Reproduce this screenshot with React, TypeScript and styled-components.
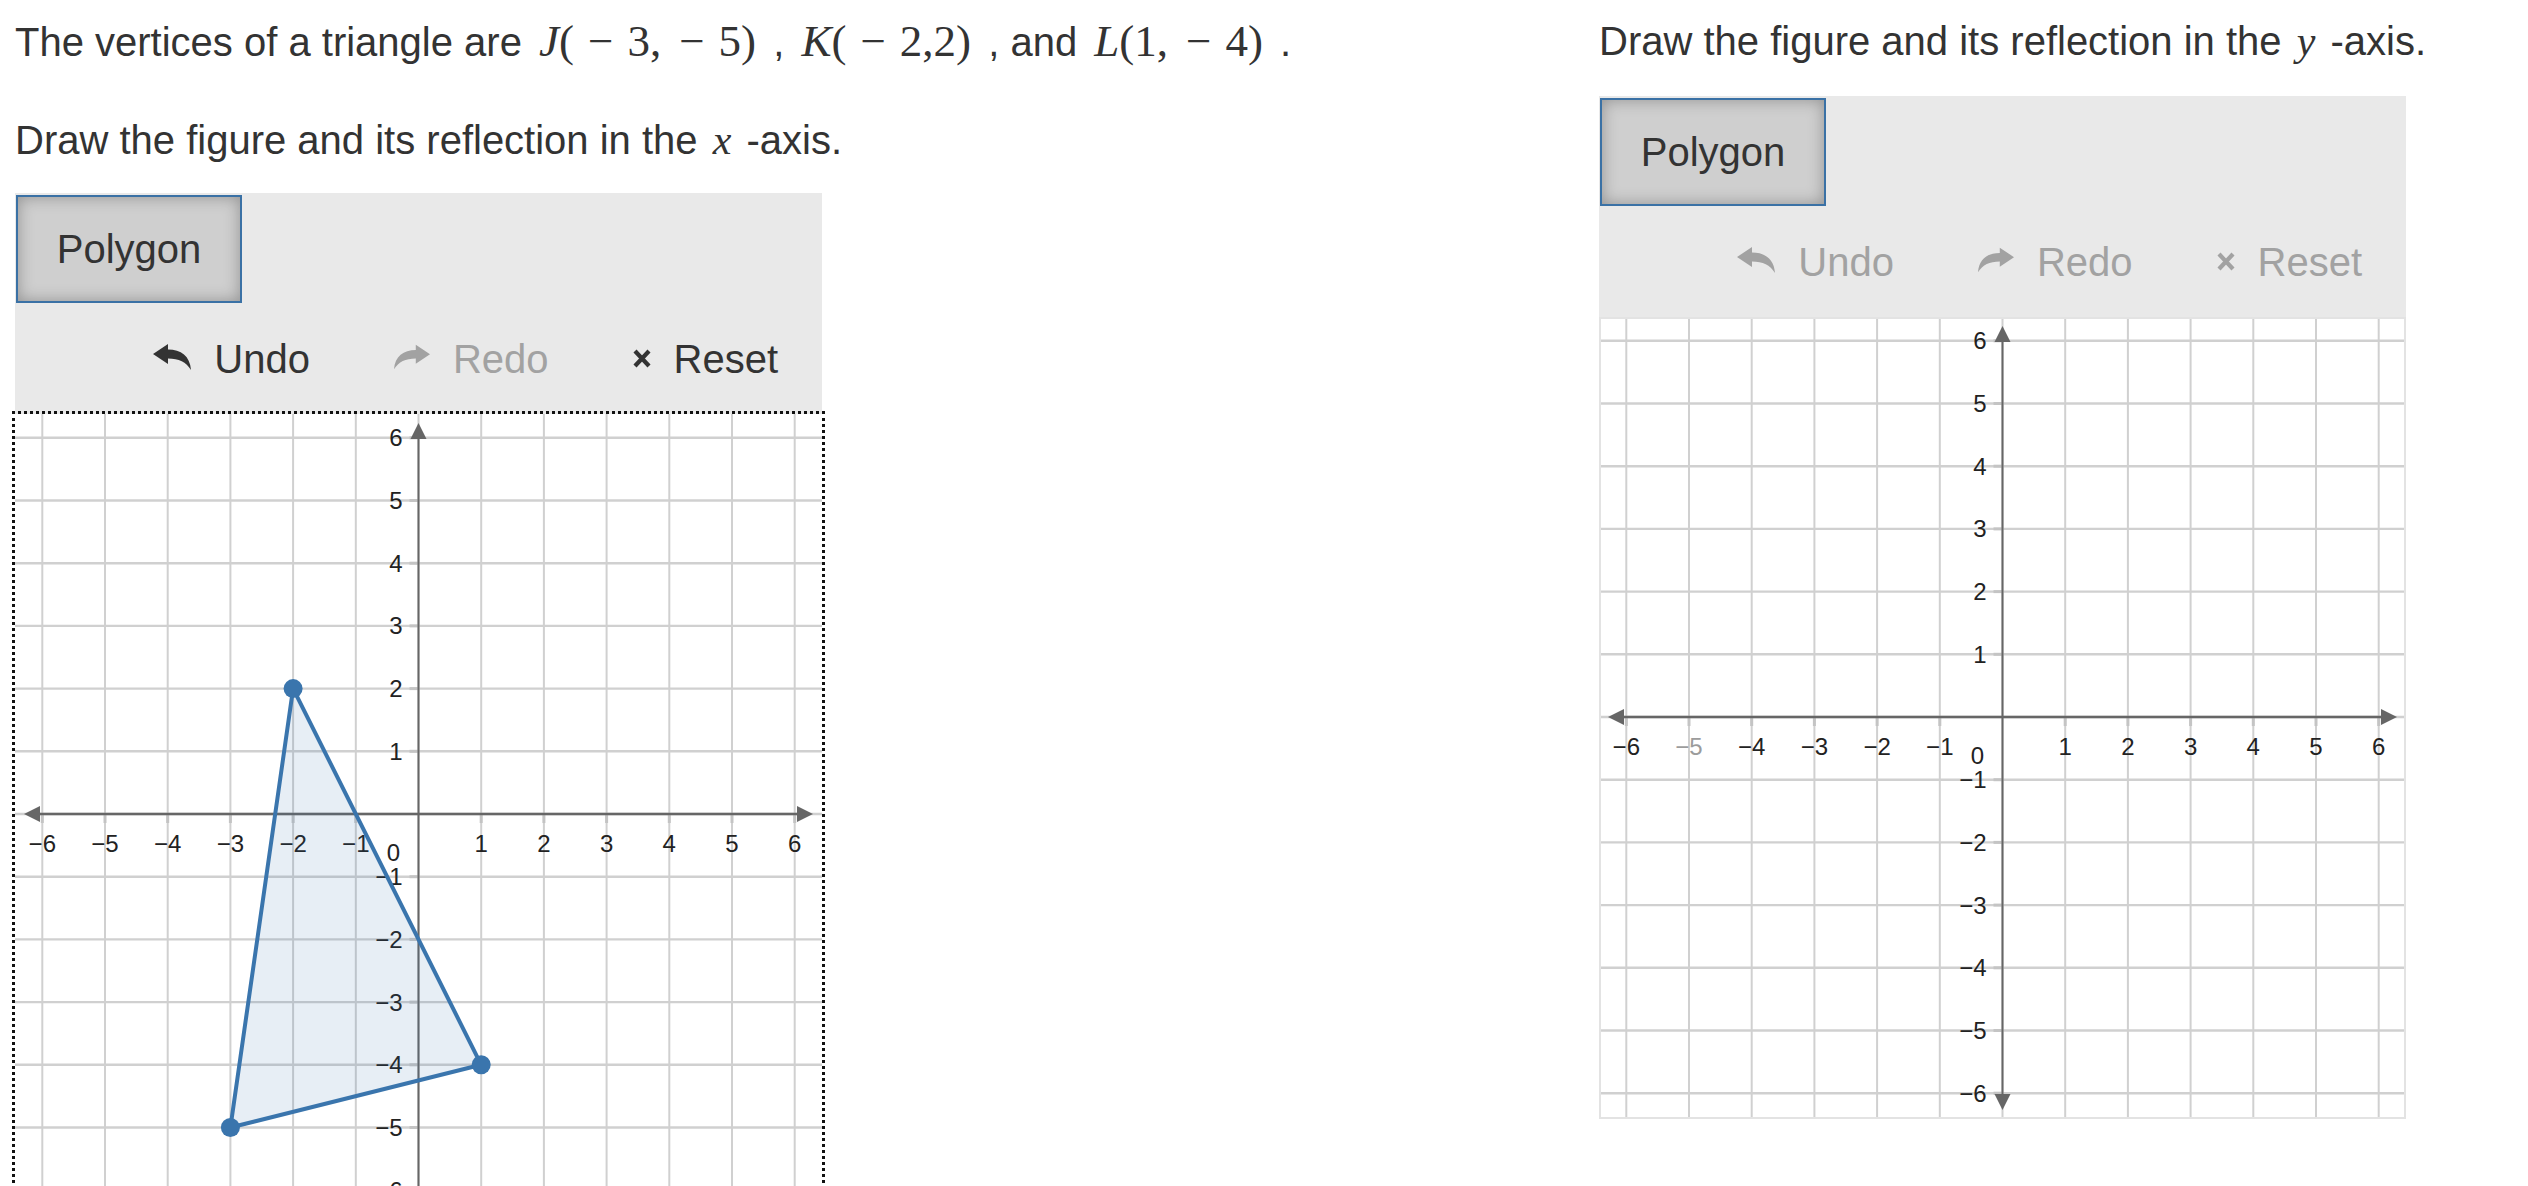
import React from "react";
import styled, { createGlobalStyle } from "styled-components";

const GlobalStyle = createGlobalStyle`
  html, body { margin: 0; padding: 0; background: #ffffff; }
  body {
    font-family: "Liberation Sans", Arial, Helvetica, sans-serif;
    color: #333333;
  }
`;

const W = 807;
const H = 802;
const OX = 403.5;
const OY = 400;
const U = 62.7;
const STEPS = [-6, -5, -4, -3, -2, -1, 0, 1, 2, 3, 4, 5, 6];
const NONZERO = STEPS.filter((s) => s !== 0);

const Page = styled.main`
  display: grid;
  grid-template-columns: 807px 807px;
  column-gap: 777px;
  align-items: start;
  padding: 12px 0 0 15px;
`;

const Column = styled.section`
  display: flex;
  flex-direction: column;
`;

const Prompt = styled.p<{ $gap: number }>`
  margin: 0 0 ${(p) => p.$gap}px;
  font-size: 40px;
  line-height: 58px;
  white-space: nowrap;
`;

const MathText = styled.span<{ $small?: boolean }>`
  font-family: "Liberation Serif", "Times New Roman", serif;
  font-size: ${(p) => (p.$small ? 42 : 45)}px;
  margin: 0 ${(p) => (p.$small ? 4 : 6)}px;
  white-space: nowrap;
`;

const MathVar = styled.i`
  font-style: italic;
`;

const MathMinus = styled.span`
  margin: 0 14px;
`;

const MathComma = styled.span<{ $space?: boolean }>`
  margin-right: ${(p) => (p.$space ? 4 : 0)}px;
`;

const Panel = styled.div`
  width: 807px;
  display: flex;
  flex-direction: column;
`;

const Toolbar = styled.div`
  background: #e9e9e9;
  display: flex;
  flex-direction: column;
`;

const ModeRow = styled.div`
  display: flex;
  padding: 2px 0 0 1px;
`;

const ModeButton = styled.button`
  width: 226px;
  height: 108px;
  padding: 0;
  margin: 0;
  border: 2px solid #3a71a5;
  background: #cfcfcf;
  box-shadow: inset 0 0 16px rgba(0, 0, 0, 0.3);
  font-family: "Liberation Sans", Arial, sans-serif;
  font-size: 40px;
  color: #333333;
  cursor: pointer;
`;

const ActionRow = styled.div`
  height: 111px;
  display: flex;
  align-items: center;
  justify-content: flex-end;
  gap: 84px;
  padding-right: 44px;
`;

const ActionButton = styled.button<{ $disabled?: boolean }>`
  display: flex;
  align-items: center;
  gap: 23px;
  padding: 0;
  margin: 0;
  border: none;
  background: none;
  font-family: "Liberation Sans", Arial, sans-serif;
  font-size: 40px;
  line-height: 1;
  color: ${(p) => (p.$disabled ? "#a2a2a2" : "#333333")};
  cursor: ${(p) => (p.$disabled ? "default" : "pointer")};
`;

const IconSvg = styled.svg<{ $lift?: number }>`
  display: block;
  flex: none;
  margin-bottom: ${(p) => p.$lift ?? 0}px;
`;

const GraphFrame = styled.div<{ $focused?: boolean }>`
  width: ${W}px;
  height: ${H}px;
  background: #ffffff;
  outline: ${(p) => (p.$focused ? "3px dotted #111111" : "2px solid #e3e3e3")};
  outline-offset: ${(p) => (p.$focused ? "0px" : "-2px")};
  svg {
    display: block;
  }
`;

const UndoIcon = () => (
  <IconSvg width={38} height={26} viewBox="0 0 38 26" $lift={4}>
    <path
      d="M0 10 L15 0 L15 5.5 C28 5.5 37 12 38 26 C33 18 26 14.5 15 14.5 L15 20 Z"
      fill="currentColor"
    />
  </IconSvg>
);

const RedoIcon = () => (
  <IconSvg width={36} height={26} viewBox="0 0 38 26" $lift={4}>
    <path
      transform="translate(38 0) scale(-1 1)"
      d="M0 10 L15 0 L15 5.5 C28 5.5 37 12 38 26 C33 18 26 14.5 15 14.5 L15 20 Z"
      fill="currentColor"
    />
  </IconSvg>
);

const ResetIcon = () => (
  <IconSvg width={18} height={19} viewBox="0 0 18 19">
    <path d="M2 2 L16 17 M16 2 L2 17" stroke="currentColor" strokeWidth={4.2} />
  </IconSvg>
);

type Pt = [number, number];

const px = (x: number) => OX + x * U;
const py = (y: number) => OY - y * U;

function Graph({ points, mutedX }: { points?: Pt[]; mutedX?: number }) {
  const labelFont = "'Liberation Sans', Arial, sans-serif";
  return (
    <svg width={W} height={H} viewBox={`0 0 ${W} ${H}`}>
      {STEPS.map((i) => (
        <line key={`v${i}`} x1={px(i)} y1={0} x2={px(i)} y2={H} stroke="#d0d0d0" strokeWidth={2} />
      ))}
      {STEPS.map((j) => (
        <line key={`h${j}`} x1={0} y1={py(j)} x2={W} y2={py(j)} stroke="#d0d0d0" strokeWidth={2.4} />
      ))}
      {NONZERO.map((i) => (
        <line key={`tx${i}`} x1={px(i)} y1={OY} x2={px(i)} y2={OY + 9} stroke="#c4c4c4" strokeWidth={3} />
      ))}
      {NONZERO.map((j) => (
        <line key={`ty${j}`} x1={OX - 9} y1={py(j)} x2={OX} y2={py(j)} stroke="#c4c4c4" strokeWidth={3} />
      ))}
      <line x1={20} y1={OY} x2={W - 20} y2={OY} stroke="#666666" strokeWidth={2.6} />
      <line x1={OX} y1={20} x2={OX} y2={H - 20} stroke="#666666" strokeWidth={2} />
      <polygon points={`9,${OY} 25,${OY - 8} 25,${OY + 8}`} fill="#666666" />
      <polygon points={`${W - 9},${OY} ${W - 25},${OY - 8} ${W - 25},${OY + 8}`} fill="#666666" />
      <polygon points={`${OX},9 ${OX - 8},25 ${OX + 8},25`} fill="#666666" />
      <polygon points={`${OX},${H - 9} ${OX - 8},${H - 25} ${OX + 8},${H - 25}`} fill="#666666" />
      {NONZERO.map((i) => (
        <text
          key={`lx${i}`}
          x={px(i)}
          y={OY + 38}
          textAnchor="middle"
          fontFamily={labelFont}
          fontSize={24}
          fill={mutedX === i ? "#9c9c9c" : "#222222"}
        >
          {i < 0 ? `\u2212${-i}` : `${i}`}
        </text>
      ))}
      {NONZERO.map((j) => (
        <text
          key={`ly${j}`}
          x={OX - 16}
          y={py(j) + 8.5}
          textAnchor="end"
          fontFamily={labelFont}
          fontSize={24}
          fill="#222222"
        >
          {j < 0 ? `\u2212${-j}` : `${j}`}
        </text>
      ))}
      <text x={OX - 25} y={OY + 47} textAnchor="middle" fontFamily={labelFont} fontSize={24} fill="#222222">
        0
      </text>
      {points && (
        <g>
          <polygon
            points={points.map(([x, y]) => `${px(x)},${py(y)}`).join(" ")}
            fill="rgba(59, 117, 173, 0.12)"
            stroke="#3a75ad"
            strokeWidth={4}
            strokeLinejoin="round"
          />
          {points.map(([x, y]) => (
            <circle key={`${x},${y}`} cx={px(x)} cy={py(y)} r={9.5} fill="#3a75ad" />
          ))}
        </g>
      )}
    </svg>
  );
}

function GraphPanel({
  active,
  points,
  mutedX,
}: {
  active?: boolean;
  points?: Pt[];
  mutedX?: number;
}) {
  return (
    <Panel>
      <Toolbar>
        <ModeRow>
          <ModeButton type="button">Polygon</ModeButton>
        </ModeRow>
        <ActionRow>
          <ActionButton type="button" $disabled={!active}>
            <UndoIcon />
            Undo
          </ActionButton>
          <ActionButton type="button" $disabled>
            <RedoIcon />
            Redo
          </ActionButton>
          <ActionButton type="button" $disabled={!active}>
            <ResetIcon />
            Reset
          </ActionButton>
        </ActionRow>
      </Toolbar>
      <GraphFrame $focused={active}>
        <Graph points={points} mutedX={mutedX} />
      </GraphFrame>
    </Panel>
  );
}

const Minus = () => <MathMinus>{"\u2212"}</MathMinus>;

export default function App() {
  return (
    <>
      <GlobalStyle />
      <Page>
        <Column>
          <Prompt $gap={40}>
            The vertices of a triangle are{" "}
            <MathText>
              <MathVar>J</MathVar>(<Minus />3<MathComma $space>,</MathComma>
              <Minus />5)
            </MathText>{" "}
            ,{" "}
            <MathText>
              <MathVar>K</MathVar>(<Minus />2,2)
            </MathText>{" "}
            , and{" "}
            <MathText>
              <MathVar>L</MathVar>(1<MathComma $space>,</MathComma>
              <Minus />4)
            </MathText>{" "}
            .
          </Prompt>
          <Prompt $gap={24}>
            Draw the figure and its reflection in the{" "}
            <MathText $small>
              <MathVar>x</MathVar>
            </MathText>{" "}
            -axis.
          </Prompt>
          <GraphPanel
            active
            points={[
              [-3, -5],
              [-2, 2],
              [1, -4],
            ]}
          />
        </Column>
        <Column>
          <Prompt $gap={26}>
            Draw the figure and its reflection in the{" "}
            <MathText $small>
              <MathVar>y</MathVar>
            </MathText>{" "}
            -axis.
          </Prompt>
          <GraphPanel mutedX={-5} />
        </Column>
      </Page>
    </>
  );
}
